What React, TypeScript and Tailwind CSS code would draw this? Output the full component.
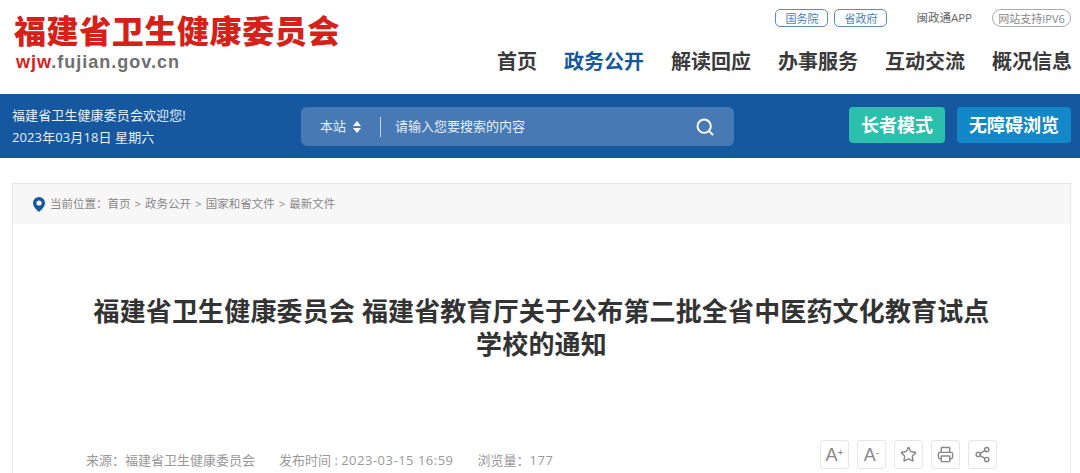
import { Search, Star, Printer, Share2 } from "lucide-react";

const navItems = ["首页", "政务公开", "解读回应", "办事服务", "互动交流", "概况信息"];
const crumbs = ["政务公开", "国家和省文件", "最新文件"];

function ToolButton({ children }: { children: React.ReactNode }) {
  return (
    <div className="flex h-[29px] w-[29px] items-center justify-center rounded-[3px] border border-[#e6e6e6] text-[#888]">
      {children}
    </div>
  );
}

function Pin() {
  return (
    <svg width="12" height="15" viewBox="0 0 12 15">
      <path
        fillRule="evenodd"
        fill="#15589f"
        d="M6 0a6 6 0 0 1 6 6c0 3.6-3.6 7-6 9-2.4-2-6-5.4-6-9a6 6 0 0 1 6-6zm0 3.4a2.6 2.6 0 1 0 0 5.2 2.6 2.6 0 0 0 0-5.2z"
      />
    </svg>
  );
}

export default function App() {
  return (
    <div className="h-[473px] w-[1080px] overflow-hidden bg-white font-['Open_Sans','Noto_Sans_CJK_SC',sans-serif]">
      {/* header */}
      <header className="flex h-[94px] justify-between pl-[14px] pr-[9px]">
        <div className="pt-[12px]">
          <div className="text-[32px] leading-[38px] font-black tracking-[0.6px] text-[#d6201a]">
            福建省卫生健康委员会
          </div>
          <div className="mt-[1px] pl-[2px] font-['Liberation_Sans',sans-serif] text-[18px] leading-[22px] font-bold tracking-[1px] text-[#6f6f6f]">
            <span className="text-[#d6201a]">wjw</span>.fujian.gov.cn
          </div>
        </div>

        <div className="flex flex-col items-end pt-[9px]">
          <div className="flex h-[18px] items-center text-[11px] leading-none">
            <span className="flex h-[18px] w-[53px] items-center justify-center rounded-[5px] border border-[#5b8cc4] text-[#4d7fb8]">
              国务院
            </span>
            <span className="ml-[6px] flex h-[18px] w-[53px] items-center justify-center rounded-[5px] border border-[#5b8cc4] text-[#4d7fb8]">
              省政府
            </span>
            <span className="ml-[29px] text-[11.5px] text-[#666]">闽政通APP</span>
            <span className="ml-[20px] flex h-[18px] w-[79px] items-center justify-center rounded-full border border-[#aaa] text-[#888]">
              网站支持IPV6
            </span>
          </div>
          <nav className="mt-[21px] -mr-px flex gap-[27px] text-[20px] leading-[28px] font-bold text-[#3a3a3a]">
            {navItems.map((item) => (
              <span key={item} className={item === "政务公开" ? "text-[#15589f]" : ""}>
                {item}
              </span>
            ))}
          </nav>
        </div>
      </header>

      {/* blue bar */}
      <div className="flex h-[64px] items-start justify-between bg-[#15589f] pl-[12px] pr-[9px]">
        <div className="w-[289px] pt-[10px] text-[13px] leading-[22px] tracking-[0.1px] text-[#e8eff7]">
          <div>福建省卫生健康委员会欢迎您!</div>
          <div>2023年03月18日 星期六</div>
        </div>

        <div className="mt-[13px] flex h-[39px] w-[433px] items-center rounded-[6px] bg-[#477ab5] px-[19px] text-[13px] text-[#e8eff7]">
          <span>本站</span>
          <span className="ml-[7px] flex flex-col items-center">
            <span className="h-0 w-0 border-x-[4px] border-b-[5px] border-x-transparent border-b-white" />
            <span className="mt-[2px] h-0 w-0 border-x-[4px] border-t-[5px] border-x-transparent border-t-white" />
          </span>
          <span className="ml-[19px] h-[20px] w-px bg-[#c5d6e9]" />
          <span className="ml-[14px]">请输入您要搜索的内容</span>
          <Search className="ml-auto text-white" size={20} strokeWidth={2.3} />
        </div>

        <div className="mt-[13px] ml-auto flex gap-[12px] text-[18px] font-bold text-white">
          <span className="flex h-[36px] w-[96px] items-center justify-center rounded-[4px] bg-[#2bbfae]">
            长者模式
          </span>
          <span className="flex h-[36px] w-[114px] items-center justify-center rounded-[4px] bg-[#1388c8]">
            无障碍浏览
          </span>
        </div>
      </div>

      {/* article card */}
      <div className="mt-[25px] mr-[9px] ml-[12px] border border-[#e6e6e6] pb-[40px]">
        <div className="flex h-[40px] items-center bg-[#f7f7f7] pl-[20px] text-[11.5px] text-[#888]">
          <Pin />
          <span className="ml-[5px]">当前位置：首页</span>
          {crumbs.map((crumb) => (
            <span key={crumb} className="flex">
              <span className="mx-[4px]">&gt;</span>
              {crumb}
            </span>
          ))}
        </div>

        <h1 className="mx-auto mt-[71px] w-[900px] text-center text-[26px] leading-[33px] font-bold tracking-[0.15px] text-[#333]">
          福建省卫生健康委员会 福建省教育厅关于公布第二批全省中医药文化教育试点学校的通知
        </h1>

        <div className="mt-[79px] flex items-start px-[73px] text-[13px] text-[#999]">
          <span className="mt-[11px]">来源：福建省卫生健康委员会</span>
          <span className="mt-[11px] ml-[24px]">
            发布时间 : <span className="tracking-[0.5px]">2023-03-15 16:59</span>
          </span>
          <span className="mt-[11px] ml-[24px]">
            浏览量：<span className="tracking-[0.5px]">177</span>
          </span>
          <div className="ml-auto flex gap-[8px]">
            <ToolButton>
              <span className="font-['Liberation_Sans',sans-serif] text-[18px] leading-none">
                A<sup className="text-[10px]">+</sup>
              </span>
            </ToolButton>
            <ToolButton>
              <span className="font-['Liberation_Sans',sans-serif] text-[18px] leading-none">
                A<sup className="text-[10px]">-</sup>
              </span>
            </ToolButton>
            <ToolButton>
              <Star size={17} />
            </ToolButton>
            <ToolButton>
              <Printer size={17} />
            </ToolButton>
            <ToolButton>
              <Share2 size={17} />
            </ToolButton>
          </div>
        </div>
      </div>
    </div>
  );
}
